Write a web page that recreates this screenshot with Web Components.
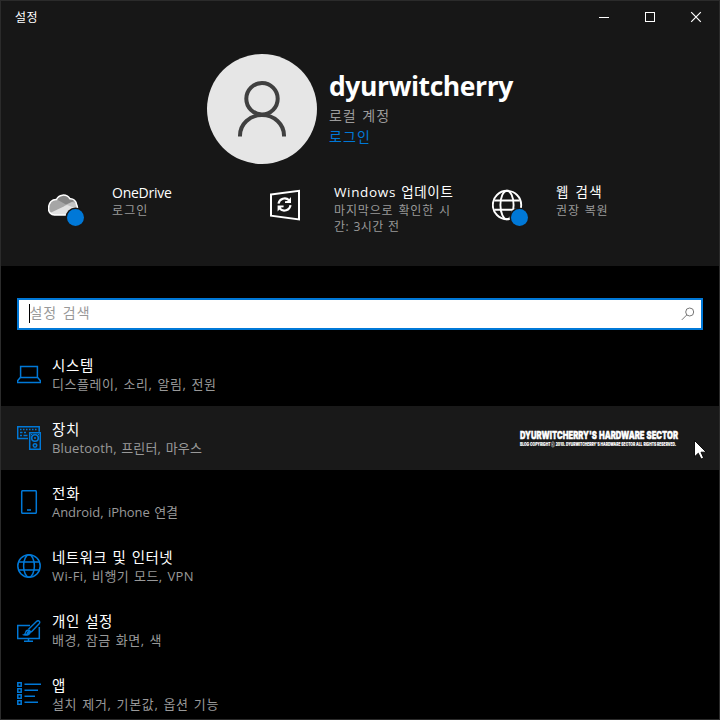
<!DOCTYPE html>
<html lang="ko">
<head>
<meta charset="utf-8">
<title>설정</title>
<style>
html,body{margin:0;height:100%;background:#000}
body{font-family:"Open Sans","Noto Sans CJK KR",sans-serif;color:#fff;overflow:hidden}
</style>
</head>
<body>
<settings-window>
  <window-bar slot="bar">설정</window-bar>
  <account-card slot="head">
    <fit-text slot="name" w="184">dyurwitcherry</fit-text>
    <fit-text slot="kind" w="61">로컬 계정</fit-text>
    <fit-text slot="link" w="42">로그인</fit-text>
  </account-card>
  <status-tile slot="tiles" icon="cloud"><fit-text class="latin" w="59.5" style="font-size:14px">OneDrive</fit-text><fit-text slot="sub" w="36.5">로그인</fit-text></status-tile>
  <status-tile slot="tiles" icon="update"><fit-text w="119.5">Windows 업데이트</fit-text><fit-text slot="sub" w="117">마지막으로 확인한 시</fit-text><fit-text slot="sub" w="65.5">간: 3시간 전</fit-text></status-tile>
  <status-tile slot="tiles" icon="web"><fit-text w="47">웹 검색</fit-text><fit-text slot="sub" w="52.5">권장 복원</fit-text></status-tile>
  <search-box><fit-text w="61">설정 검색</fit-text></search-box>
  <settings-row icon="laptop"><fit-text w="42">시스템</fit-text><fit-text slot="sub" w="164.5">디스플레이, 소리, 알림, 전원</fit-text></settings-row>
  <settings-row icon="devices" active><fit-text w="28">장치</fit-text><fit-text slot="sub" w="150">Bluetooth, 프린터, 마우스</fit-text><site-mark slot="end"></site-mark></settings-row>
  <settings-row icon="phone"><fit-text w="28.500">전화</fit-text><fit-text slot="sub" w="126">Android, iPhone 연결</fit-text></settings-row>
  <settings-row icon="globe"><fit-text w="121">네트워크 및 인터넷</fit-text><fit-text slot="sub" w="142">Wi-Fi, 비행기 모드, VPN</fit-text></settings-row>
  <settings-row icon="paint"><fit-text w="61">개인 설정</fit-text><fit-text slot="sub" w="110">배경, 잠금 화면, 색</fit-text></settings-row>
  <settings-row icon="apps"><fit-text w="14">앱</fit-text><fit-text slot="sub" w="167">설치 제거, 기본값, 옵션 기능</fit-text></settings-row>
  <mouse-pointer slot="pointer"></mouse-pointer>
</settings-window>
<script>
const CLOUD = 'M54.500 215a6.200 6.200 0 0 1-6-6.200c0-7 4-9.500 8-9.300 2-5 9.500-6.300 13.500-.8 3.500-.2 6.300 2.500 6.600 6 2 3.800 1 10.300-4.100 10.300z';
const ICONS = {
  cloud: ['48 183 40 48', `<clipPath id="c"><path d="${CLOUD}"/></clipPath><g clip-path="url(#c)"><path d="M46 192h34v26H46z" fill="#a6a6a6"/><path d="M56 199l10 5.500 14-6v-8H56z" fill="#858585"/><path d="M64 206l8-4 9 2v6H64z" fill="#c4c4c4"/><path d="M49 213.500l18-8.500 14 5v8H49z" fill="#e2e2e2"/></g><path d="${CLOUD}" fill="none" stroke="#fff" stroke-width="1.500"/><circle cx="75.500" cy="217.500" r="10" fill="#171717"/><circle cx="75.500" cy="217.500" r="8.500" fill="#0078d7"/>`],
  update: ['270 183 40 48', `<path d="M271 194.500L299 190.800v28.600L271 215.700z" fill="none" stroke="#fff" stroke-width="2"/><path d="M278.500 203.600a6.300 6.300 0 0 1 10.600-3.300M290.500 205.100a6.300 6.300 0 0 1-10.800 3.500" fill="none" stroke="#fff" stroke-width="2.200"/><path d="M291 197v6h-6v-1.700l2.500-.2zM277.600 211.500v-6h6v1.700l-2.500.3z" fill="#fff"/>`],
  web: ['492 183 40 48', `<g fill="none" stroke="#fff" stroke-width="1.900"><circle cx="507" cy="205" r="14.200"/><ellipse cx="507" cy="205" rx="6.600" ry="14.200"/><path d="M494.300 200.500h25.400M494.300 209.700h25.400"/></g><circle cx="519.500" cy="217.500" r="10" fill="#171717"/><circle cx="519.500" cy="217.500" r="8.500" fill="#0078d7"/>`],
  laptop: ['17 362 24 24', `<path d="M20.600 377v-10.400h16.800V377M20.300 377.500h17.400l2.700 3.200v1.700H17.600v-1.700z" fill="none" stroke="#0078d7" stroke-width="1.500"/>`],
  devices: ['17 426 24 24', `<path d="M28 438.500H17.700v-11.800h21.500v5" fill="none" stroke="#0078d7" stroke-width="1.500"/><path d="M20 429.500h1.500m1.500 0h1.500m1.500 0h1.500m1.500 0h1.500m1.500 0h1.500m1.500 0h1.500M20 432.500h2.500m1.500 0h2M20 435.500h2m1.500 0h4" stroke="#0078d7" stroke-width="1.600"/><path d="M29.700 432.700h10.600v16.600H29.700z" fill="#191919" stroke="#0078d7" stroke-width="1.500"/><circle cx="35" cy="438" r="3.300" fill="none" stroke="#0078d7" stroke-width="1.600"/><circle cx="35" cy="438" r="1" fill="#0078d7"/><circle cx="35" cy="445.500" r="1.700" fill="none" stroke="#0078d7" stroke-width="1.600"/><path d="M31 434.500h1m6 0h1" stroke="#0078d7"/>`],
  phone: ['17 490 24 24', `<rect x="21.700" y="490.700" width="14.600" height="22.600" rx="1" fill="none" stroke="#0078d7" stroke-width="1.500"/><path d="M27 510h4" stroke="#0078d7" stroke-width="1.600"/>`],
  globe: ['17 554 24 24', `<g fill="none" stroke="#0078d7" stroke-width="1.500"><circle cx="29" cy="566" r="11.200"/><ellipse cx="29" cy="566" rx="5.400" ry="11.200"/><path d="M18.500 562h21M18.500 570h21"/></g>`],
  paint: ['17 618 24 24', `<g fill="none" stroke="#0078d7" stroke-width="1.500"><path d="M30 625.600H17.700v12.800h21.600v-11.500M28.500 638.500v3M24 641.300h9"/><path d="M28.300 629.500l7.900-7.800c1.300-1.200 2.700-1 3.100-.5.600.6.500 1.800-.4 2.900l-7.600 8M28.300 629.500l3 2.700" stroke-width="1.400"/></g><path d="M28 629.500c-1.800.2-2.700 1.200-3 2.800-.3 1.500-1.300 2.300-3.200 2.500 3 1.800 8.600 1.300 9.200-2.600z" fill="#0078d7"/><path d="M27.500 631.500c-1 .3-1.200 1.300-1.300 2.300" stroke="#000" stroke-width=".8" fill="none"/>`],
  apps: ['17 682 24 24', `<g fill="none" stroke="#0078d7" stroke-width="1.500"><path d="M17.800 682.800h3.400v3.400h-3.400zM17.800 688.800h3.400v3.400h-3.400zM17.800 694.800h3.400v3.400h-3.400zM17.800 700.800h3.400v3.400h-3.400z"/><path d="M24.500 684.300H41M24.500 690.300H38M24.500 696.300H35M24.500 702.300H38"/></g>`]
};
const icon = (name, w, h) => `<svg width="${w}" height="${h}" viewBox="${ICONS[name][0]}">${ICONS[name][1]}</svg>`;
const define = (tag, render) => customElements.define(tag, class extends HTMLElement {
  connectedCallback() {
    if (!this.shadowRoot) this.attachShadow({mode: 'open'}).innerHTML = render(this);
  }
});

define('settings-window', () => `<style>
:host{display:flex;flex-direction:column;box-sizing:border-box;width:720px;height:720px;border:1px solid #2b2b2b;background:#000;overflow:hidden}
header{background:#171717;height:265px;flex:none}
.tiles{display:grid;grid-template-columns:repeat(3,222px);padding:19px 0 0 47px}
main{padding-top:32px}
</style><header><slot name="bar"></slot><slot name="head"></slot><div class="tiles"><slot name="tiles"></slot></div></header><main><slot></slot></main><slot name="pointer"></slot>`);

define('window-bar', () => `<style>
:host{display:flex;justify-content:space-between;height:32px;line-height:34px;font-size:12px;padding-left:14px}
span{letter-spacing:.5px}
svg{display:block}
</style><span><slot></slot></span><svg width="138" height="32" viewBox="581 1 138 32" fill="none" stroke="#fff" shape-rendering="crispEdges"><path d="M599 17.500h10"/><path d="M645.500 12.500h9v9h-9z"/><path d="M691.200 12.200l9.600 9.600M700.800 12.200l-9.600 9.600" shape-rendering="auto" stroke-width="1.200"/></svg>`);

define('account-card', () => `<style>
:host{display:flex;height:110px;padding:21px 0 0 206px;gap:12px}
.t{display:flex;flex-direction:column;padding-top:13px}
.n{font-size:26.500px;font-weight:700;line-height:38px}
.k,.l{font-size:14px;line-height:21px}.k{color:#9b9b9b}.l{color:#0078d7}
</style><svg width="110" height="110" viewBox="207 54 110 110"><circle cx="262" cy="109" r="55" fill="#e6e6e6"/><g fill="none" stroke="#404040" stroke-width="4"><circle cx="262" cy="98.700" r="15.700"/><path d="M240 136.500v-1a22 20.500 0 0 1 44 0v1"/></g></svg>
<div class="t"><div class="n"><slot name="name"></slot></div><div class="k"><slot name="kind"></slot></div><div class="l"><slot name="link"></slot></div></div>`);

define('status-tile', el => `<style>
:host{display:flex;gap:24px}svg{display:block;flex:none}
.n{font-size:13.500px;line-height:19px}.s{display:flex;flex-direction:column;padding-top:1px;font-size:12px;line-height:16px;color:#999}
</style>${icon(el.getAttribute('icon'), 40, 48)}<div><div class="n"><slot></slot></div><div class="s"><slot name="sub"></slot></div></div>`);

define('search-box', () => `<style>
:host{display:flex;align-items:center;box-sizing:border-box;width:686px;height:32px;margin:0 0 12px 16px;padding:0 6px 0 10px;border:2px solid #0078d7;background:#fff;color:#999;font-size:14px;line-height:28px}
i{width:1px;height:19px;margin-bottom:1px;background:#000}span{flex:1;margin:-1px 0 1px -.500px}
</style><i></i><span><slot></slot></span><svg width="14" height="14" viewBox="681 307 14 14" fill="none" stroke="#777" stroke-width="1"><circle cx="689.700" cy="312" r="4"/><path d="M686.800 314.900l-5 5"/></svg>`);

define('settings-row', el => `<style>
:host{display:flex;box-sizing:border-box;height:64px;padding:20px 0 0 16px}
:host([active]){background:#191919}
svg{display:block;flex:none}
.x{margin:-6px 0 0 11px;flex:1}
.n{font-size:14.500px;line-height:20px}.s{font-size:13px;line-height:17px;color:#999}
</style>${icon(el.getAttribute('icon'), 24, 24)}<div class="x"><div class="n"><slot></slot></div><div class="s"><slot name="sub"></slot></div></div><slot name="end"></slot>`);

define('site-mark', () => `<style>
:host{display:block;width:158px;margin:4px 41px 0 0;font-family:Inter,"Noto Sans CJK KR",sans-serif;font-weight:900}
.a{font-size:10.500px;line-height:12px;-webkit-text-stroke:.4px #fff}
.b{font-size:4.600px;line-height:5px;-webkit-text-stroke:.1px #fff}
</style><div class="a"><fit-text squeeze w="158">DYURWITCHERRY'S HARDWARE SECTOR</fit-text></div><div class="b"><fit-text squeeze w="156">BLOG COPYRIGHT ⓒ 2010. DYURWITCHERRY'S HARDWARE SECTOR ALL RIGHTS RESERVED.</fit-text></div>`);

define('mouse-pointer', () => `<style>
:host{position:absolute;left:694px;top:440px;width:13px;height:20px}svg{display:block}
</style><svg width="13" height="20" viewBox="0 0 13 20"><path d="M.5.500v16.300l3.800-3.600 2.700 5.900 2.600-1.200-2.600-5.700h5.200z" fill="#fff" stroke="#000" stroke-width=".9"/></svg>`);

// Makes its line take the width given in "w": by letter spacing, or with "squeeze" by narrowing the glyphs.
customElements.define('fit-text', class extends HTMLElement {
  connectedCallback() {
    const root = this.attachShadow({mode: 'open'});
    root.innerHTML = `<style>:host{display:block}span{display:inline-block;white-space:nowrap;vertical-align:top;transform-origin:0 0;word-spacing:.08em}</style><span><slot></slot></span>`;
    const span = root.querySelector('span');
    const w = +this.getAttribute('w'), now = span.getBoundingClientRect().width;
    if (this.hasAttribute('squeeze')) {
      this.style.width = w + 'px';
      span.style.transform = `scaleX(${w / now})`;
    } else {
      span.style.letterSpacing = (w - now) / this.textContent.length + 'px';
    }
  }
});
</script>
</body>
</html>
